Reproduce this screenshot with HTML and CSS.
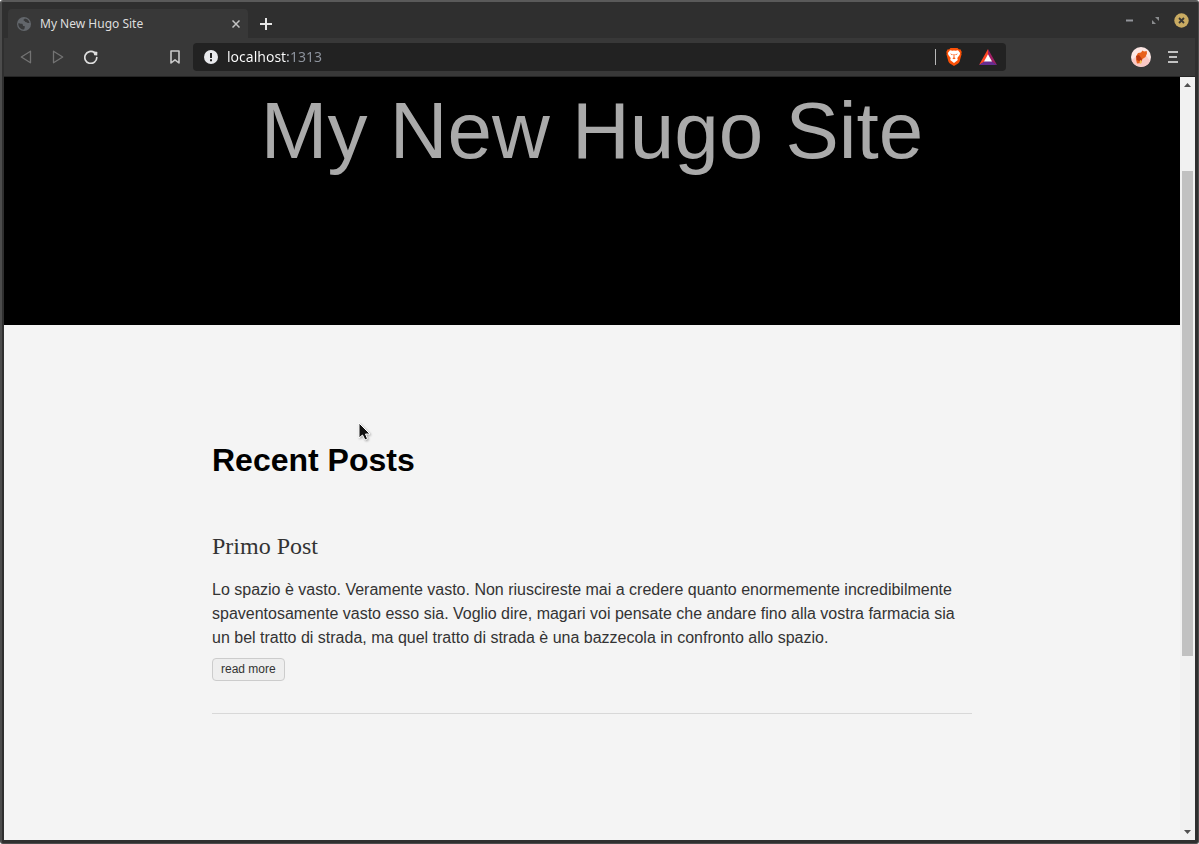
FILE: index.html
```html
<!DOCTYPE html>
<html lang="it">
<head>
<meta charset="utf-8">
<meta name="viewport" content="width=device-width, initial-scale=1">
<title>My New Hugo Site</title>
<link rel="stylesheet" href="styles.css">
</head>
<body>
<div class="window">
  <header class="tabbar">
    <div class="tab">
      <svg class="globe" viewBox="0 0 14 14" width="14" height="14" aria-hidden="true"><circle cx="7" cy="7" r="7" fill="#62666b"/><path d="M1.3 6.2c1.3.1 2 .4 3.1.5 1.2 0 1.5.6 1.5 1.500 0 .8.7.7 1.300.8.8.2.7.8.5 1.400-.3.8-.2 1.500-.7 2.200C3.600 12.500 1 10 1.300 6.200ZM7.800 1.600c-.2.700-1 .6-1.200 1.200-.3.700.3 1 .9 1.100.7.1.4.9 1 1.200.6.200 1 .1 1.500.5.700.6 1.400.5 2.500.4-.4-2.500-2.200-4.200-4.700-4.400Z" fill="#38393a"/></svg>
      <span class="tab-title">My New Hugo Site</span>
      <button class="icon-button tab-close" aria-label="Close tab"><svg viewBox="0 0 8 8" width="8" height="8"><path d="M.5.5l7 7M7.500.5l-7 7" stroke="#c4c4c4" stroke-width="1.500"/></svg></button>
    </div>
    <button class="icon-button new-tab" aria-label="New tab"><svg viewBox="0 0 12 12" width="12" height="12"><path d="M6 0v12M0 6h12" stroke="#e6e6e6" stroke-width="2"/></svg></button>
    <div class="window-controls">
      <button class="icon-button" aria-label="Minimize"><svg viewBox="0 0 15 15" width="15" height="15"><path d="M4 7.500h7" stroke="#93959b" stroke-width="2"/></svg></button>
      <button class="icon-button" aria-label="Maximize"><svg viewBox="0 0 15 15" width="15" height="15"><path d="M7 4h4v4zM4 7v4h4z" fill="#8a8c8e"/></svg></button>
      <button class="icon-button" aria-label="Close window"><svg viewBox="0 0 15 15" width="15" height="15"><circle cx="7.500" cy="7.500" r="7.200" fill="#c9ab62"/><path d="M5 5l5 5M10 5l-5 5" stroke="#393734" stroke-width="1.800"/></svg></button>
    </div>
  </header>

  <nav class="toolbar" aria-label="Browser">
    <div class="nav-buttons">
      <button class="icon-button" aria-label="Back"><svg viewBox="0 0 12 14" width="12" height="14"><path d="M10.500 1.200v11.600L1.300 7z" fill="none" stroke="#737373" stroke-width="1.300" stroke-linejoin="round"/></svg></button>
      <button class="icon-button" aria-label="Forward"><svg viewBox="0 0 12 14" width="12" height="14"><path d="M1.500 1.200v11.600L10.700 7z" fill="none" stroke="#737373" stroke-width="1.300" stroke-linejoin="round"/></svg></button>
      <button class="icon-button" aria-label="Reload"><svg viewBox="1 0 14 14" width="14" height="14"><path d="M11.500 2.700A6 6 0 1 0 13.800 7.500" fill="none" stroke="#dedede" stroke-width="1.700" stroke-linecap="round"/><path d="M10.200 1.400l3.600.3c.4 0 .6.300.6.600l-.2 3.200-3-.3z" fill="#dedede"/></svg></button>
    </div>
    <button class="icon-button bookmark" aria-label="Bookmark"><svg viewBox="0 0 10 14" width="10" height="14"><path d="M1 1h8v12L5 9.800 1 13z" fill="none" stroke="#c9c9c9" stroke-width="1.600" stroke-linejoin="round"/></svg></button>
    <div class="address-bar">
      <svg viewBox="0 0 14 14" width="14" height="14" aria-hidden="true"><circle cx="7" cy="7" r="7" fill="#e9eaed"/><path d="M6 3h2v5H6zM6 9.300h2v2H6z" fill="#222"/></svg>
      <input class="address" type="text" aria-label="Address" value="localhost:1313">
      <span class="address-divider"></span>
      <button class="icon-button shield" aria-label="Brave Shields"><svg viewBox="0 0 16 18" width="16" height="18"><path d="M4.500 0h7L13 1.500l1.300-.2L15.800 4l-.5 1.300.3 1-2 7.200c-.2.800-.8 1.500-1.500 2L8 18l-4.100-2.500c-.7-.5-1.300-1.200-1.500-2l-2-7.200.3-1L.2 4l1.500-2.700 1.300.2z" fill="#fb5107"/><path d="M4 2.300l2.500.4L8 2.400l1.500.3 2.500-.4L14.100 5l-.5 1.900-2.300 3 .5 2.100L8 15l-3.800-3 .5-2.100-2.300-3L1.900 5z" fill="#fff"/><path d="M4 5.500l2.700.7-.5 1zM12 5.500l-2.700.7.5 1zM7.500 6h1l-.1 3.400 1.300.9L8 11.300l-1.700-1 1.300-.9z" fill="#fb5107"/></svg></button>
      <button class="icon-button" aria-label="Brave Rewards"><svg viewBox="0 0 18 16" width="18" height="16"><path d="M9 0L0 16l9-5z" fill="#ff4724"/><path d="M9 0l9 16-9-5z" fill="#9e1f63"/><path d="M0 16h18l-9-6z" fill="#662d91"/><path d="M9 5.200l4 7.300H5z" fill="#fff"/></svg></button>
    </div>
    <div class="toolbar-end">
      <button class="icon-button" aria-label="Profile"><svg viewBox="0 0 20 20" width="20" height="20"><circle cx="10" cy="10" r="10" fill="#fde6e4"/><path d="M.7 13l5-4h9.800l3.700 5A10 10 0 0 1 .7 13z" fill="#fbc9c5"/><path d="M7 6l3-.5 1.500-2 1.500 1 2.700-.5.3 2.500-1.500 3.500-3 2L10 16l-4 .5-1-4 .5-4z" fill="#e8601c"/><path d="M5 9l3-1 3 4-1 3-4-2z" fill="#b93611"/><path d="M9 13l2 1-1 3-1.500-1z" fill="#f5c65a"/></svg></button>
      <button class="icon-button" aria-label="Menu"><svg viewBox="0 0 10 12" width="10" height="12"><path d="M0 1h10M1 6h8M0 11h10" stroke="#c2c2c2" stroke-width="2"/></svg></button>
    </div>
  </nav>

  <div class="viewport">
    <div class="page">
      <div class="hero"><h1 class="site-title">My New Hugo Site</h1></div>
      <main class="content">
        <h2 class="section-title">Recent Posts</h2>
        <article class="post">
          <h3 class="post-title"><a href="#primo-post">Primo Post</a></h3>
          <p class="summary">Lo spazio è vasto. Veramente vasto. Non riuscireste mai a credere quanto enormemente incredibilmente spaventosamente vasto esso sia. Voglio dire, magari voi pensate che andare fino alla vostra farmacia sia un bel tratto di strada, ma quel tratto di strada è una bazzecola in confronto allo spazio.</p>
          <a class="read-more" href="#primo-post">read more</a>
        </article>
      </main>
    </div>
    <div class="scrollbar" aria-hidden="true">
      <svg viewBox="0 0 7 4" width="7" height="4"><path d="M0 4L3.500 0 7 4z" fill="#505050"/></svg>
      <div class="track"><div class="thumb"></div></div>
      <svg viewBox="0 0 7 4" width="7" height="4"><path d="M0 0l3.500 4L7 0z" fill="#505050"/></svg>
    </div>
  </div>
</div>
<svg class="pointer" viewBox="0 0 14 21" width="14" height="21" aria-hidden="true"><path d="M1 1v15l3.500-3L7 18l2.500-1.200L7.500 12H12z" fill="#111" stroke="#fff" stroke-width="1"/></svg>
</body>
</html>
```
FILE: styles.css
```css
* { box-sizing: border-box; }

body {
  margin: 0;
  background: #fff;
  font-family: "Liberation Sans", Arial, sans-serif;
}

.window {
  display: flex;
  flex-direction: column;
  min-height: 100vh;
  padding: 0 3px 3px 2px;
  border: solid #4c4c4c;
  border-width: 2px 1px 1px 2px;
  border-top-color: #5a5a5a;
  border-radius: 3px;
  background: #2f2f2f;
}

.icon-button {
  display: flex;
  align-items: center;
  justify-content: center;
  padding: 0;
  border: 0;
  background: none;
}

.tabbar {
  display: flex;
  align-items: flex-end;
  height: 36px;
  padding: 0 6px 0 4px;
}

.tab {
  display: flex;
  align-items: center;
  width: 240px;
  height: 29px;
  padding: 0 8px 0 9px;
  border-radius: 4px 4px 0 0;
  background: #383838;
}

.tab-title {
  flex: 1;
  margin-left: 9px;
  color: #dedede;
  font: 12px/16px "Noto Sans", sans-serif;
}

.new-tab { width: 36px; height: 29px; }

.window-controls {
  display: flex;
  gap: 11px;
  margin: 0 0 10px auto;
}

.toolbar {
  display: flex;
  align-items: center;
  height: 39px;
  padding: 0 17px 0 16px;
  border-bottom: 1px solid #252525;
  background: #383838;
}

.nav-buttons { display: flex; gap: 20px; }

.bookmark { margin: 0 13px 0 72px; }

.address-bar {
  display: flex;
  flex: 1;
  align-items: center;
  height: 28px;
  padding: 0 9px 0 11px;
  border-radius: 4px;
  background: #222;
}

.address {
  flex: 1;
  min-width: 0;
  margin-left: 9px;
  padding: 0;
  border: 0;
  outline: 0;
  background: linear-gradient(90deg, #fff 61px, #8e949e 61px);
  background-clip: text;
  -webkit-background-clip: text;
  color: transparent;
  font: 14px/20px "Noto Sans", sans-serif;
}

.address-divider {
  width: 1px;
  height: 16px;
  background: #b8b8b8;
}

.shield { margin: 0 17px 0 10px; }

.toolbar-end {
  display: flex;
  align-items: center;
  gap: 17px;
  margin-left: 125px;
}

.viewport {
  display: flex;
  flex: 1;
}

.page {
  flex: 1;
  background: #f4f4f4;
}

.hero {
  min-height: 248px;
  padding: 4px 32px 0;
  background: #000;
}

.site-title {
  margin: 0;
  color: #aaa;
  font-size: 80px;
  font-weight: 400;
  line-height: 100px;
  text-align: center;
}

.content {
  max-width: 760px;
  margin: 0 auto;
  padding: 115px 0 64px;
}

.section-title {
  margin: 0 0 51px;
  color: #000;
  font-size: 32px;
  line-height: 40px;
}

.post {
  padding-bottom: 32px;
  border-bottom: 1px solid #d8d8d8;
  color: #333;
}

.post-title {
  margin: 0 0 17px;
  font: 400 24px/30px "Liberation Serif", serif;
}

.post-title a {
  color: inherit;
  text-decoration: none;
}

.summary {
  margin: 0 0 8px;
  font-size: 16px;
  line-height: 24px;
}

.read-more {
  display: block;
  width: fit-content;
  padding: 3px 8px;
  border: 1px solid #ccc;
  border-radius: 4px;
  background: #eee;
  color: #333;
  font-size: 12px;
  line-height: 15px;
  text-decoration: none;
}

.scrollbar {
  display: flex;
  flex-direction: column;
  align-items: center;
  width: 15px;
  padding: 6px 0;
  background: #f1f1f1;
}

.track {
  display: flex;
  flex: 1;
  flex-direction: column;
  align-self: stretch;
  padding: 0 2px;
}

.track::before { content: ""; flex: 84; }
.thumb { flex: 485; background: #c1c1c1; }
.track::after { content: ""; flex: 174; }

.pointer {
  position: absolute;
  top: 422px;
  left: 358px;
  filter: drop-shadow(1px 1px 1px #0005);
}
```
